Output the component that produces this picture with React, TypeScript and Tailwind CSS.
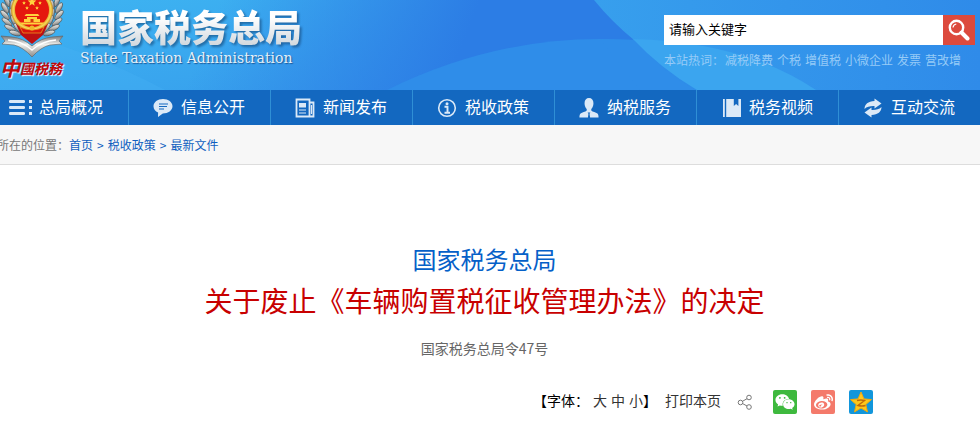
import React, { useState } from "react";
import { FaWeixin, FaWeibo } from "react-icons/fa";

interface NavItem {
  label: string;
  icon: React.ReactNode;
}

const navItems: NavItem[] = [
  {
    label: "总局概况",
    icon: (
      <svg width="24" height="18" viewBox="0 0 24 18" fill="currentColor">
        <rect x="0" y="1" width="16" height="3" rx="1.2" />
        <rect x="0" y="7" width="16" height="3" rx="1.2" />
        <rect x="0" y="13" width="16" height="3" rx="1.2" />
        <rect x="20" y="1" width="3" height="3" />
        <rect x="20" y="7" width="3" height="3" />
        <rect x="20" y="13" width="3" height="3" />
      </svg>
    ),
  },
  {
    label: "信息公开",
    icon: (
      <svg width="20" height="20" viewBox="0 0 20 20">
        <path
          d="M10 1C4.600 1 .5 4.200 .5 8.300c0 2.700 1.800 5 4.600 6.300L5 19l4.800-3.500c5.400 0 9.700-3.100 9.700-7.200S15.400 1 10 1z"
          fill="currentColor"
        />
        <path d="M6 6h9M6 8.500h8M6 11h5" stroke="#1569c0" strokeWidth="1.100" />
      </svg>
    ),
  },
  {
    label: "新闻发布",
    icon: (
      <svg width="20" height="20" viewBox="0 0 20 20" fill="none" stroke="currentColor">
        <path d="M1.500 1.500h13v17h-13zM14.500 4.500h4v14h-4" strokeWidth="1.800" />
        <path d="M4 5h7v4.500H4z" fill="currentColor" stroke="none" />
        <path d="M4 12h7M4 15h7M16.500 7v9" strokeWidth="1.200" />
      </svg>
    ),
  },
  {
    label: "税收政策",
    icon: (
      <svg width="20" height="20" viewBox="0 0 20 20" fill="none" stroke="currentColor">
        <circle cx="10" cy="10" r="8.300" strokeWidth="1.600" />
        <circle cx="10" cy="5.700" r="1.500" fill="currentColor" stroke="none" />
        <path d="M7.500 8.800h3v5.600M7.500 14.700h5.500" strokeWidth="1.900" />
      </svg>
    ),
  },
  {
    label: "纳税服务",
    icon: (
      <svg width="20" height="20" viewBox="0 0 22 20" preserveAspectRatio="none" fill="currentColor">
        <path d="M11 0C8 0 6.100 2 6.100 5.200c0 2.500 1 4.600 2.400 5.700v1.600c-1.500 1.500-5 1.800-6.800 3.100C.7 16.500.5 18 .5 19.500h9.300l.6-3.700-.9-1.300h3l-.9 1.300.6 3.700h9.300c0-1.500-.2-3-1.200-3.900-1.800-1.300-5.300-1.600-6.800-3.100v-1.600c1.400-1.100 2.400-3.200 2.400-5.700C15.900 2 14 0 11 0z" />
      </svg>
    ),
  },
  {
    label: "税务视频",
    icon: (
      <svg width="20" height="20" viewBox="-2 0 20 20" fill="currentColor">
        <path d="M0 1h1.800v18H0zM3.200 1h7.600v7l2.300-2 2.300 2V1H18v18H3.200z" />
      </svg>
    ),
  },
  {
    label: "互动交流",
    icon: (
      <svg width="18" height="20" viewBox="0 0 18 20" fill="currentColor">
        <path d="M10.500 .5l7 5-7 5V8C6.500 7.800 3 8.500 .5 11 .6 6.300 4 3.200 10.500 3z" />
        <path d="M7.500 19.500l-7-5 7-5V12c4 .2 7.500-.5 10-3-.1 4.700-3.500 7.800-10 8z" />
      </svg>
    ),
  },
];

const hotWords = ["减税降费", "个税", "增值税", "小微企业", "发票", "营改增"];
const crumbs = ["首页", "税收政策", "最新文件"];
const fontSizes = ["大", "中", "小"];

const starPoints = (cx: number, cy: number, r: number) =>
  Array.from({ length: 10 }, (_, i) => {
    const a = (Math.PI / 5) * i - Math.PI / 2;
    const d = i % 2 ? r * 0.46 : r;
    return `${(cx + d * Math.cos(a)).toFixed(2)},${(cy + d * Math.sin(a)).toFixed(2)}`;
  }).join(" ");

function HeaderBackdrop() {
  return (
    <svg
      className="absolute inset-0 h-full w-full"
      viewBox="0 0 980 90"
      preserveAspectRatio="none"
      aria-hidden="true"
    >
      <defs>
        <linearGradient id="sky" gradientUnits="userSpaceOnUse" x1="100" y1="0" x2="160" y2="360">
          <stop offset="0" stopColor="#3db2f1" />
          <stop offset="1" stopColor="#2c7de5" />
        </linearGradient>
        <linearGradient id="skyRight" gradientUnits="userSpaceOnUse" x1="220" y1="0" x2="445" y2="90">
          <stop offset="0" stopColor="#2c7de5" stopOpacity="0" />
          <stop offset="1" stopColor="#2c7de5" />
        </linearGradient>
        <linearGradient id="wedge" x1="0" y1="0" x2="1" y2="0">
          <stop offset="0" stopColor="#379fed" />
          <stop offset="1" stopColor="#2f8be9" />
        </linearGradient>
      </defs>
      <rect width="980" height="90" fill="url(#sky)" />
      <rect width="980" height="90" fill="url(#skyRight)" />
      <path d="M0 28Q90 50 165 90H0z" fill="#49b4f4" opacity=".3" />
      <path d="M387 90Q490 39 600 39Q800 42 980 90z" fill="#2f8de9" />
      <path d="M594 0H980V90H815Q700 85 634 40Q612 22 594 0z" fill="url(#wedge)" />
      <path d="M634 40Q665 74 697 90H640L600 39z" fill="#2f8de9" />
      <path d="M633 39Q745 42 816 90H697Q660 68 633 39z" fill="#3ba5ef" />
    </svg>
  );
}

function Emblem() {
  // one side of the wheat wreath, mirrored for the other one
  const leaves = [
    [7, 1, 70],
    [5, 8, 60],
    [5, 15, 48],
    [7, 22, 38],
    [10, 28, 28],
    [15, 33, 18],
    [12, 6, 95],
    [12, 14, 80],
    [14, 21, 65],
    [18, 28, 50],
  ];
  return (
    <svg width="64" height="57" viewBox="0 0 64 57" role="img" aria-label="税徽">
      <defs>
        <linearGradient id="silver" x1="0" y1="0" x2="1" y2="1">
          <stop offset="0" stopColor="#ffffff" />
          <stop offset=".5" stopColor="#b9b9b5" />
          <stop offset="1" stopColor="#57575a" />
        </linearGradient>
        <linearGradient id="ribbon" x1="0" y1="0" x2="0" y2="1">
          <stop offset="0" stopColor="#77777a" />
          <stop offset=".4" stopColor="#f0f0ec" />
          <stop offset="1" stopColor="#8a8a8a" />
        </linearGradient>
        <radialGradient id="gold">
          <stop offset=".75" stopColor="#d98a10" />
          <stop offset=".9" stopColor="#f9d95a" />
          <stop offset="1" stopColor="#c58a1c" />
        </radialGradient>
        <g id="wreath">
          {leaves.map(([x, y, a], i) => (
            <ellipse
              key={i}
              cx={x}
              cy={y}
              rx="6"
              ry="2.300"
              fill="url(#silver)"
              stroke="#4f565a"
              strokeWidth=".7"
              transform={`rotate(${a} ${x} ${y})`}
            />
          ))}
        </g>
      </defs>
      <use href="#wreath" />
      <use href="#wreath" transform="matrix(-1 0 0 1 64 0)" />
      <path d="M16 24l5 11 11 9 11-9 5-11z" fill="#bd1013" />
      <path
        d="M1 36l11 1q11 1 20 9 9-8 20-9l11-1-4 5 3 3-12 1q-9 2-18 12-9-10-18-12L2 44l3-3z"
        fill="url(#ribbon)"
        stroke="#66686a"
        strokeWidth=".7"
      />
      <path d="M8 40q14 1 24 10 10-9 24-10" fill="none" stroke="#fff" strokeWidth="1.500" />
      <circle cx="32" cy="10" r="21" fill="url(#gold)" />
      <circle cx="32" cy="10" r="17" fill="#e5180e" />
      <path d="M20 27q12 6 24 0l-3 6H23z" fill="#d9140d" stroke="#efa51f" strokeWidth=".7" />
      <g fill="#ffd33d">
        <polygon points={starPoints(32, 2, 4.5)} />
        <polygon points={starPoints(24, 3, 2)} />
        <polygon points={starPoints(40, 3, 2)} />
        <polygon points={starPoints(27, 8, 2)} />
        <polygon points={starPoints(37, 8, 2)} />
        <path d="M26 14h12l1.500 2h-15zM27 17h10v2h3v3H24v-3h3zM20 22.500h24l-2 2H22z" />
      </g>
      <path d="M30.500 19h3v3h-3z" fill="#d33a0b" />
      <circle cx="32" cy="28" r="2.500" fill="#f0b62b" />
    </svg>
  );
}

function Brand() {
  return (
    <div className="flex">
      <div className="flex w-16 flex-col items-start">
        <Emblem />
        <div className="flex items-center leading-[22px] font-bold text-[#c1080c] italic [text-shadow:1px_1px_1px_#fff]">
          <span className="text-xl leading-[22px]">中</span>
          <span className="text-sm leading-[22px]">國税務</span>
        </div>
      </div>
      <div className="ml-4 pt-[5px]">
        <h1 className="bg-linear-to-b from-white from-30% to-[#cfd6dc] bg-clip-text text-[37px] leading-[42px] font-black text-transparent drop-shadow-[2px_2px_1px_rgba(20,70,120,0.6)]">
          国家税务总局
        </h1>
        <p className="mt-px font-['DejaVu_Serif',serif] text-sm leading-5 text-[#e4eff8] [text-shadow:1px_1px_1px_#1c5c9c]">
          State Taxation Administration
        </p>
      </div>
    </div>
  );
}

function SearchBox() {
  const [keyword, setKeyword] = useState("请输入关键字");

  return (
    <div className="w-[316px] pt-[15px]">
      <form className="mr-[5px] flex h-[30px]" onSubmit={(e) => e.preventDefault()}>
        <input
          className="min-w-0 flex-1 bg-white px-[5px] pb-[2px] text-[13px] text-black outline-none"
          aria-label="关键字"
          value={keyword}
          onChange={(e) => setKeyword(e.target.value)}
        />
        <button
          type="submit"
          aria-label="搜索"
          className="flex w-8 items-center justify-center bg-[#dc4a3d] text-white"
        >
          <svg width="22" height="22" viewBox="0 0 22 22" fill="none" stroke="currentColor">
            <circle cx="8.500" cy="8.500" r="6.700" strokeWidth="2.400" />
            <path d="M13.500 13.500l6 6" strokeWidth="4" strokeLinecap="round" />
            <path d="M5 8.500q.3-3 3.300-3.500" strokeWidth="1.200" />
          </svg>
        </button>
      </form>
      <div className="mt-[5px] flex gap-px text-xs leading-5 whitespace-nowrap text-[#96cbf7]">
        <span>本站热词：</span>
        <div className="flex gap-1">
          {hotWords.map((word) => (
            <a key={word} href="#">
              {word}
            </a>
          ))}
        </div>
      </div>
    </div>
  );
}

function QzoneIcon() {
  return (
    <svg width="24" height="24" viewBox="0 0 24 24">
      <polygon
        points={starPoints(12, 13, 11)}
        fill="#fdc81c"
        stroke="#f0a90f"
        strokeWidth="1"
        strokeLinejoin="round"
      />
      <path d="M8 10.500q4-1 7.500 0l-6.500 5q4 1 7.500 0" fill="none" stroke="#c06a0c" strokeWidth="1.400" />
    </svg>
  );
}

function Toolbar() {
  return (
    <div className="mt-[30px] mr-24 flex items-center justify-end text-sm text-black">
      <div className="flex pb-1 leading-5">
        <span>【字体：</span>
        <div className="ml-1 flex gap-1 text-[#333]">
          {fontSizes.map((size) => (
            <button key={size} type="button">
              {size}
            </button>
          ))}
        </div>
        <span>】</span>
        <button type="button" className="ml-2 text-[#333]">
          打印本页
        </button>
      </div>
      <button type="button" aria-label="分享" className="ml-4">
        <svg width="16" height="16" viewBox="0 0 16 16" fill="none" stroke="#777">
          <circle cx="3.500" cy="8.500" r="2.300" />
          <circle cx="12" cy="3.500" r="2.300" />
          <circle cx="12" cy="13" r="2.300" />
          <path d="M5.500 7.300l4.500-2.600M5.500 9.500l4.500 2.500" />
        </svg>
      </button>
      <div className="ml-5 flex gap-[14px] text-white">
        <button
          type="button"
          aria-label="微信"
          className="flex size-6 items-center justify-center rounded-xs bg-[#3eb93e]"
        >
          <FaWeixin size={20} />
        </button>
        <button
          type="button"
          aria-label="微博"
          className="flex size-6 items-center justify-center rounded-xs bg-[#f47a6b]"
        >
          <FaWeibo size={19} />
        </button>
        <button
          type="button"
          aria-label="QQ空间"
          className="flex size-6 items-center justify-center rounded-xs bg-[#1296db]"
        >
          <QzoneIcon />
        </button>
      </div>
    </div>
  );
}

function App() {
  return (
    <div className="min-h-screen overflow-x-hidden bg-white font-['Noto_Sans_CJK_SC',sans-serif]">
      <header className="relative h-[90px] overflow-hidden">
        <HeaderBackdrop />
        <div className="relative flex justify-between">
          <Brand />
          <SearchBox />
        </div>
      </header>

      <nav className="flex h-[35px] bg-[#1368c0] text-base text-white">
        {navItems.map((item) => (
          <a
            key={item.label}
            href="#"
            className="flex flex-1 items-center gap-1 border-l border-[#2f8fd5] pl-5 whitespace-nowrap first:w-32 first:flex-none first:border-l-0 first:pl-[7px]"
          >
            <span className="flex w-7 justify-center text-[#dbe9f7]">{item.icon}</span>
            <span className="pb-1">{item.label}</span>
          </a>
        ))}
      </nav>

      <div className="flex h-10 items-center overflow-hidden border-b border-[#ddd] bg-[#f7f7f7] text-xs text-[#0f5fbf]">
        <span className="-ml-[3px] text-[#777]">所在的位置：</span>
        {crumbs.map((crumb, index) => (
          <React.Fragment key={crumb}>
            {index > 0 && <span className="px-1">&gt;</span>}
            <a href="#">{crumb}</a>
          </React.Fragment>
        ))}
      </div>

      <main className="pt-[76px] pr-[11px]">
        <div className="text-center">
          <p className="text-2xl leading-9 text-[#0560c8]">国家税务总局</p>
          <h2 className="text-[28px] leading-[46px] text-[#c80000]">
            关于废止《车辆购置税征收管理办法》的决定
          </h2>
          <p className="mt-[13px] text-sm leading-6 text-[#666]">国家税务总局令47号</p>
        </div>
        <Toolbar />
      </main>
    </div>
  );
}

export default App;
